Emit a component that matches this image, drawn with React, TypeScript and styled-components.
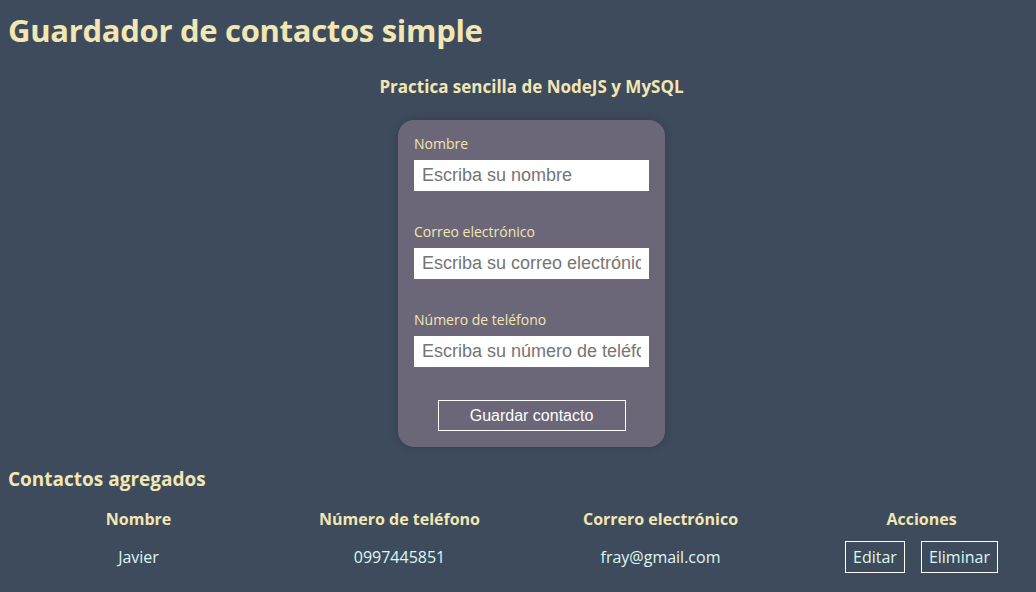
import React from "react";
import styled, { createGlobalStyle } from "styled-components";

const GlobalStyle = createGlobalStyle`
  html, body {
    margin: 0;
    background-color: #3e4b5d;
    overflow: hidden;
  }
  body {
    padding: 8px;
    font-family: "Open Sans", "Lato", sans-serif;
  }
`;

const contacts = [
  { name: "Javier", phone: "0997445851", email: "fray@gmail.com" },
];

export default function App() {
  return (
    <>
      <GlobalStyle />
      <Page>
        <Title>Guardador de contactos simple</Title>
        <Subtitle>Practica sencilla de NodeJS y MySQL</Subtitle>
        <FormCard>
          <Field>
            <Label>Nombre</Label>
            <Input placeholder="Escriba su nombre" />
          </Field>
          <Field>
            <Label>Correo electrónico</Label>
            <Input placeholder="Escriba su correo electrónico" />
          </Field>
          <Field>
            <Label>Número de teléfono</Label>
            <Input placeholder="Escriba su número de teléfono" />
          </Field>
          <SaveButton>Guardar contacto</SaveButton>
        </FormCard>
        <SectionTitle>Contactos agregados</SectionTitle>
        <Table>
          <thead>
            <tr>
              <th>Nombre</th>
              <th>Número de teléfono</th>
              <th>Correro electrónico</th>
              <th>Acciones</th>
            </tr>
          </thead>
          <tbody>
            {contacts.map((c) => (
              <tr key={c.phone}>
                <td>{c.name}</td>
                <td>{c.phone}</td>
                <td>{c.email}</td>
                <td>
                  <Actions>
                    <ActionButton>Editar</ActionButton>
                    <ActionButton>Eliminar</ActionButton>
                  </Actions>
                </td>
              </tr>
            ))}
          </tbody>
        </Table>
      </Page>
    </>
  );
}

const Page = styled.div`
  width: 1047px;
  display: flex;
  flex-direction: column;
  color: #f2e6b3;
`;

const Title = styled.h1`
  margin: 0;
  font-size: 31px;
  font-weight: 700;
  letter-spacing: -0.3px;
  line-height: 44px;
`;

const Subtitle = styled.h3`
  margin: 24px 0 0 0;
  text-align: center;
  font-size: 17px;
  font-weight: 700;
  line-height: 22px;
`;

const FormCard = styled.form`
  align-self: center;
  width: 267px;
  box-sizing: border-box;
  margin-top: 22px;
  padding: 15px 16px 16px;
  background-color: #6b6779;
  border-radius: 16px;
  box-shadow: 0 0 8px rgba(0, 0, 0, 0.18);
  display: flex;
  flex-direction: column;
`;

const Field = styled.div`
  display: flex;
  flex-direction: column;
  gap: 7px;
  margin-bottom: 32px;
`;

const Label = styled.label`
  font-size: 14px;
  line-height: 18px;
  color: #f2e6b3;
`;

const Input = styled.input`
  height: 31px;
  box-sizing: border-box;
  border: none;
  outline: none;
  padding: 0 8px;
  font-family: "Liberation Sans", Arial, sans-serif;
  font-size: 18px;
  color: #333;
  background: #fff;

  &::placeholder {
    color: #757575;
  }
`;

const SaveButton = styled.button`
  align-self: center;
  width: 188px;
  height: 31px;
  margin-top: 1px;
  background: transparent;
  border: 1px solid #fff;
  color: #fff;
  font-family: "Liberation Sans", Arial, sans-serif;
  font-size: 16px;
`;

const SectionTitle = styled.h2`
  margin: 20px 0 0 0;
  font-size: 19px;
  font-weight: 700;
  line-height: 24px;
`;

const Table = styled.table`
  width: 1044px;
  margin-top: 17px;
  border-collapse: separate;
  border-spacing: 0;
  table-layout: fixed;

  th {
    font-size: 16px;
    font-weight: 700;
    color: #f2e6b3;
    padding: 0 0 5px;
    line-height: 22px;
  }

  td {
    text-align: center;
    font-size: 16px;
    color: #dcf7f4;
    padding: 6px 0;
    line-height: 22px;
  }
`;

const Actions = styled.div`
  display: flex;
  justify-content: center;
  gap: 16px;
`;

const ActionButton = styled.button`
  height: 32px;
  padding: 0 7px;
  background: transparent;
  border: 1px solid #fff;
  color: #dcf7f4;
  font-family: "Open Sans", "Lato", sans-serif;
  font-size: 16px;
`;
